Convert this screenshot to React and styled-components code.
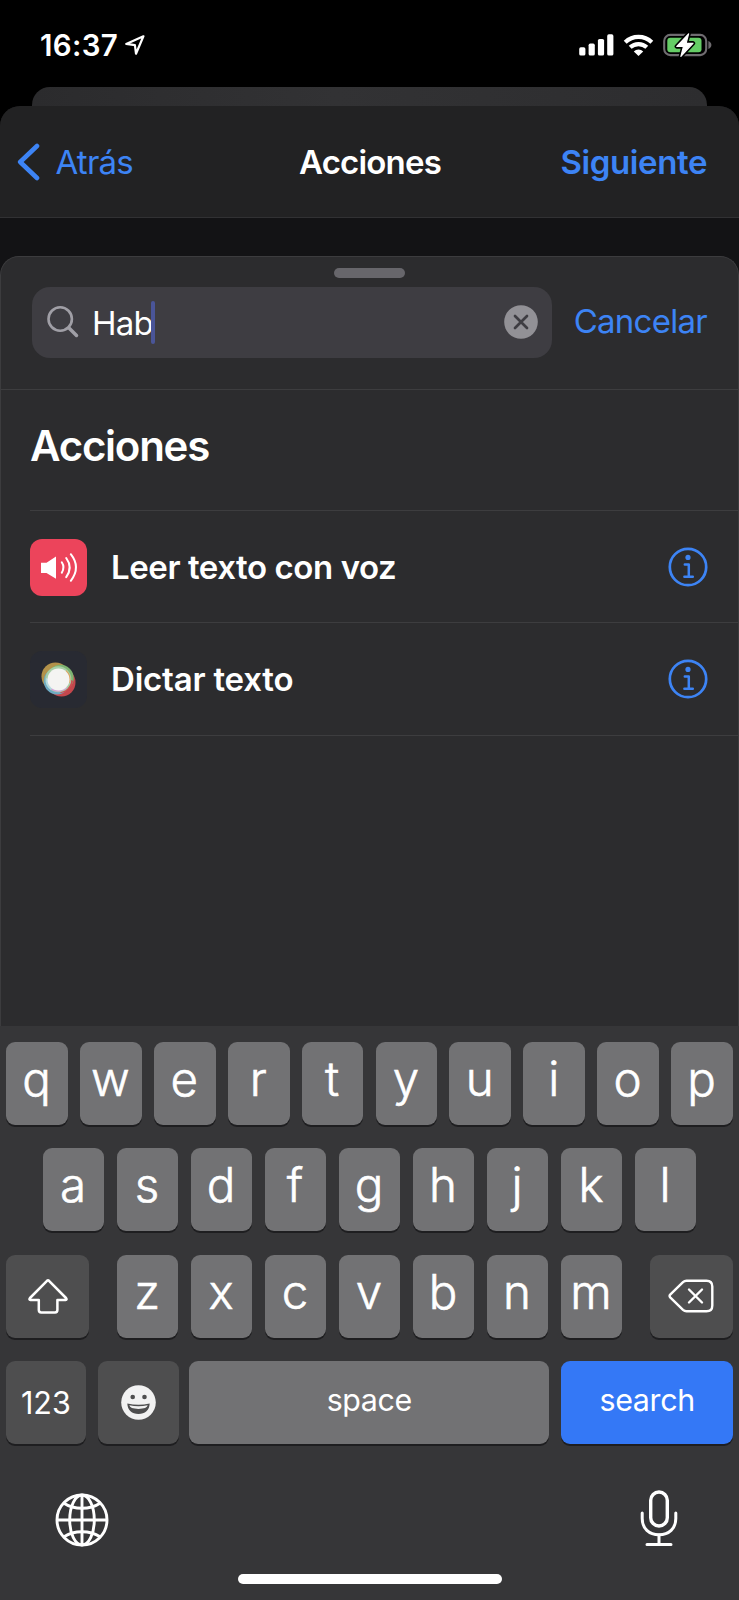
import React from "react";
import styled, { createGlobalStyle } from "styled-components";

const blue = "#3d84f5";

const GlobalStyle = createGlobalStyle`
  *, *::before, *::after { box-sizing: border-box; }
  body { margin: 0; background: #000; }
  button { font: inherit; color: inherit; background: none; border: 0; margin: 0; padding: 0; }
  svg { display: block; flex: none; }
`;

const Phone = styled.div`
  display: flex;
  flex-direction: column;
  width: 739px;
  height: 1600px;
  overflow: hidden;
  background: #000;
  color: #fff;
  font-family: Inter, "Liberation Sans", sans-serif;
`;

const StatusBar = styled.header`
  display: flex;
  align-items: center;
  height: 87px;
  padding: 3px 27px 0 40px;
`;

const Clock = styled.time`
  width: 85px;
  font-size: 29.5px;
  font-weight: 600;
  letter-spacing: 0.3px;
  white-space: nowrap;
`;

const StatusIcons = styled.div`
  display: flex;
  align-items: center;
  gap: 9px;
  margin-left: auto;
`;

const BackSheet = styled.div`
  flex: none;
  height: 19px;
  margin: 0 32px;
  border-radius: 18px 18px 0 0;
  background: linear-gradient(90deg, #2b2b2d, #323234 45%, #2d2d2f);
`;

const Sheet = styled.div`
  flex: 1;
  display: flex;
  flex-direction: column;
  min-height: 0;
  border-radius: 20px 20px 0 0;
  background: #131315;
  overflow: hidden;
`;

const NavBar = styled.nav`
  flex: none;
  display: grid;
  grid-template-columns: 1fr auto 1fr;
  align-items: center;
  height: 112px;
  padding: 0 32px 0 17px;
  background: #222223;
  border-bottom: 1px solid #313133;
  font-size: 33px;
`;

const BackButton = styled.button`
  display: flex;
  align-items: center;
  gap: 14.5px;
  color: ${blue};
  letter-spacing: -0.75px;
`;

const NavTitle = styled.h1`
  margin: 0 0 0 16px;
  font-size: 33px;
  font-weight: 600;
  letter-spacing: -0.8px;
`;

const NextButton = styled.button`
  justify-self: end;
  color: ${blue};
  font-weight: 600;
  letter-spacing: -0.4px;
`;

const Panel = styled.main`
  flex: none;
  display: flex;
  flex-direction: column;
  height: 770px;
  margin-top: 38px;
  border: 1px solid #3c3c3e;
  border-bottom: 0;
  border-radius: 19px 19px 0 0;
  background: #2c2c2e;
`;

const Grabber = styled.div`
  width: 71px;
  height: 10px;
  margin: 11px auto 9.5px;
  border-radius: 5px;
  background: #67666b;
`;

const SearchRow = styled.div`
  display: flex;
  align-items: center;
  height: 102.5px;
  padding: 0 31px 32px;
  border-bottom: 1px solid #3d3d3f;
`;

const SearchField = styled.div`
  display: flex;
  align-items: center;
  width: 520px;
  height: 70.5px;
  padding: 0 14px 0 15px;
  border-radius: 18px;
  background: #3e3d42;
`;

const Query = styled.span`
  margin-left: 13px;
  padding-top: 1px;
  font-size: 33px;
  letter-spacing: -0.8px;
`;

const Caret = styled.span`
  width: 4px;
  height: 43px;
  margin-left: -1.5px;
  border-radius: 2px;
  background: #4a5598;
`;

const ClearButton = styled.button`
  margin-left: auto;
`;

const CancelButton = styled.button`
  margin: -3px 0 0 auto;
  color: ${blue};
  font-size: 33px;
  letter-spacing: -0.73px;
`;

const SectionTitle = styled.h2`
  display: flex;
  align-items: center;
  height: 120px;
  margin: 0;
  padding: 0 29px 10px;
  font-size: 42px;
  font-weight: 600;
  letter-spacing: -1.25px;
`;

const ActionList = styled.ul`
  list-style: none;
  margin: 0 0 0 29px;
  padding: 0;
  border-top: 1px solid #3d3d3f;
`;

const ActionRow = styled.li`
  display: flex;
  align-items: center;
  height: 112.3px;
  padding: 1px 30.5px 0 0;
  border-bottom: 1px solid #3d3d3f;
`;

const ActionIcon = styled.span`
  display: grid;
  place-items: center;
  width: 57px;
  height: 57px;
  border-radius: 12px;
  background: ${(p) => p.$tint};
`;

const ActionName = styled.span`
  margin-left: 24px;
  font-size: 33px;
  font-weight: 600;
  letter-spacing: ${(p) => p.$track}px;
`;

const InfoButton = styled.button`
  margin-left: auto;
`;

const Keyboard = styled.section`
  flex: 1;
  display: flex;
  flex-direction: column;
  padding: 16px 6px 0;
  background: #363638;
`;

const KeyRow = styled.div`
  display: flex;
  justify-content: center;
  gap: ${(p) => p.$gap || 12.1}px;
  margin-bottom: 23.4px;
`;

const keyColors = { letter: "#727274", dark: "#4e4e4f", accent: "#3478f6" };

const Key = styled.button`
  display: flex;
  flex: none;
  align-items: center;
  justify-content: center;
  width: ${(p) => p.$width || 61.8}px;
  height: 83px;
  margin: ${(p) => p.$margin || 0};
  padding-bottom: ${(p) => p.$lift || 0}px;
  border-radius: 9px;
  background: ${(p) => keyColors[p.$kind || "letter"]};
  box-shadow: 0 2px 0 #1e1e20;
  font-size: ${(p) => p.$size || 47.5}px;
  font-weight: ${(p) => p.$weight || 300};
  letter-spacing: ${(p) => p.$track || 0}px;
`;

const LetterKey = styled(Key)`
  padding-right: 1px;
  -webkit-text-stroke: 0.6px #fff;
`;

const BottomBar = styled.div`
  display: flex;
  justify-content: space-between;
  align-items: center;
  height: 60px;
  margin-top: 22px;
  padding: 0 55px 0 48.5px;
`;

const HomeIndicator = styled.div`
  width: 264px;
  height: 10px;
  margin: 24px auto 0;
  border-radius: 5px;
  background: #fff;
`;

const LocationIcon = () => (
  <svg width="20" height="20" viewBox="0 0 20 20" fill="none" stroke="#fff" strokeWidth="2.2" strokeLinejoin="round">
    <path d="M18.4 1.3 1.2 8.9 9.9 10.1 11 18.7Z" />
  </svg>
);

const SignalIcon = () => (
  <svg width="35" height="22" viewBox="0 0 35 22" fill="#fff">
    <rect x="0.2" y="13.2" width="6.2" height="8.4" rx="1.7" />
    <rect x="9.6" y="9.6" width="6.2" height="12" rx="1.7" />
    <rect x="18.9" y="4.9" width="6.2" height="16.7" rx="1.7" />
    <rect x="28.2" y="0.3" width="6.2" height="21.3" rx="1.7" />
  </svg>
);

const WifiIcon = () => (
  <svg width="31" height="23" viewBox="0 0 31 23">
    <g fill="none" stroke="#fff" strokeWidth="4.2">
      <path d="M2.2 8.2A19.3 19.3 0 0 1 28.8 8.2" />
      <path d="M7.2 13.3A12.2 12.2 0 0 1 23.8 13.3" />
    </g>
    <path d="M10.8 17.4A6.8 6.8 0 0 1 20.2 17.4L15.500 22.100Z" fill="#fff" />
  </svg>
);

const BatteryIcon = () => (
  <svg width="49" height="26" viewBox="0 0 49 26">
    <rect x="1.200" y="2.900" width="42" height="20.200" rx="6" fill="none" stroke="#6f6c70" strokeWidth="2.100" />
    <path d="M45.400 9v8c2-.8 3-2.300 3-4s-1-3.200-3-4Z" fill="#6f6c70" />
    <rect x="4.300" y="5.800" width="34.200" height="14.400" rx="3" fill="#65cd66" />
    <path d="M25.600 1.800 13.800 14.500h6.700L17.900 24.300 30 11.300h-6.900Z" fill="#fff" stroke="#000" strokeWidth="4.400" strokeLinejoin="round" />
    <path d="M25.600 1.800 13.800 14.500h6.700L17.900 24.300 30 11.300h-6.900Z" fill="#fff" stroke="#fff" strokeWidth="1.200" strokeLinejoin="round" />
  </svg>
);

const ChevronIcon = () => (
  <svg width="24" height="38" viewBox="0 0 24 38" fill="none" stroke={blue} strokeWidth="4.600" strokeLinecap="round" strokeLinejoin="round">
    <path d="M20 3 3.200 19 20 35" />
  </svg>
);

const SearchIcon = () => (
  <svg width="32" height="32" viewBox="0 0 32 32" fill="none" stroke="#a09fa6" strokeLinecap="round">
    <circle cx="13.200" cy="13" r="11.700" strokeWidth="2.600" />
    <path d="M22 22 29.500 29.400" strokeWidth="3.500" />
  </svg>
);

const ClearIcon = () => (
  <svg width="34" height="34" viewBox="0 0 34 34">
    <circle cx="17" cy="17" r="16.800" fill="#929196" />
    <path d="M11 11 23 23M23 11 11 23" stroke="#3e3d42" strokeWidth="2.700" strokeLinecap="round" />
  </svg>
);

const SpeakerIcon = () => (
  <svg width="57" height="57" viewBox="0 0 57 57">
    <path d="M11 23.700h5.500L26 17.500v22.200l-9.500-5.800H11Z" fill="#fff" />
    <g fill="none" stroke="#fff" strokeWidth="2" strokeLinecap="round">
      <path d="M31.800 23.300q3.300 5 0 10.400" />
      <path d="M36.200 19q7 9.600 0 19.100" />
      <path d="M40.800 15.200q10.400 13.200 0 26.600" />
    </g>
  </svg>
);

const DictationIcon = () => (
  <svg width="57" height="57" viewBox="0 0 57 57">
    <circle cx="25.500" cy="25.500" r="14" fill="#b3924a" />
    <circle cx="31.500" cy="31.500" r="14" fill="#c4474c" />
    <circle cx="30.500" cy="27" r="13.200" fill="#7db471" />
    <circle cx="27" cy="30.200" r="13.200" fill="#6eabc4" />
    <path d="M31 42a13.500 13.500 0 0 0 12-12L36 26 26 38Z" fill="#cf4c52" />
    <circle cx="28.300" cy="28.300" r="13" fill="#a8cfa6" />
    <path d="M36 19a12.600 12.600 0 0 1 4 13l-5-3Z" fill="#dda35d" />
    <path d="M20 38q8 6 17-1l-4-7H22Z" fill="#d2a3d8" />
    <path d="M16 27a12 12 0 0 0 5 12l5-8Z" fill="#b3dae0" />
    <circle cx="28.500" cy="28.500" r="11" fill="#f4f4f2" />
  </svg>
);

const InfoIcon = () => (
  <svg width="40" height="40" viewBox="0 0 40 40" fill="none" stroke={blue} strokeWidth="2.700" strokeLinecap="round" strokeLinejoin="round">
    <circle cx="20" cy="20" r="18.200" />
    <circle cx="20" cy="10.400" r="2.600" fill={blue} stroke="none" />
    <path d="M16.800 17.500h4v12.200M16.400 29.700h8.400" strokeWidth="2.500" />
  </svg>
);

const ShiftIcon = () => (
  <svg width="40" height="36" viewBox="0 0 40 36" fill="none" stroke="#fff" strokeWidth="2.500" strokeLinejoin="round">
    <path d="M19 2.800Q20 1.900 21 2.800L38 20q1.300 1.700-.5 1.900H29.400V32q0 2.400-2.400 2.400H13.200q-2.400 0-2.400-2.400V21.900H2.500Q.7 21.700 2 20Z" />
  </svg>
);

const DeleteIcon = () => (
  <svg width="46" height="34" viewBox="0 0 46 34" fill="none" stroke="#fff" strokeWidth="2.400" strokeLinecap="round" strokeLinejoin="round">
    <path d="M18.500 1.700H38.500Q44.300 1.700 44.300 7.500V26.500Q44.300 32.300 38.500 32.300H18.500Q16.500 32.300 15 30.900L2.200 18.400Q1 17 2.200 15.600L15 3.100Q16.500 1.700 18.500 1.700Z" />
    <path d="M21 10.500 34 23.500M34 10.500 21 23.500" />
  </svg>
);

const EmojiIcon = () => (
  <svg width="35" height="35" viewBox="0 0 35 35">
    <circle cx="17.500" cy="17.500" r="17.300" fill="#f2f2f2" />
    <circle cx="11.700" cy="12" r="2.300" fill="#4e4e4f" />
    <circle cx="23.500" cy="12" r="2.300" fill="#4e4e4f" />
    <path d="M6.300 18.600Q17.500 21 28.700 18.600C28.500 25.300 24 29 17.500 29S6.500 25.300 6.300 18.600Z" fill="#4e4e4f" />
    <path d="M8.300 20.300Q17.500 22.200 26.700 20.300Q26 23.800 17.500 23.900Q9 23.800 8.300 20.300Z" fill="#f2f2f2" />
  </svg>
);

const GlobeIcon = () => (
  <svg width="54" height="54" viewBox="0 0 54 54" fill="none" stroke="#fff" strokeWidth="2.900">
    <circle cx="27" cy="27" r="25" />
    <ellipse cx="27" cy="27" rx="12.300" ry="25" />
    <path d="M27 2v50M2 27h50" />
    <path d="M9 10.300Q16.500 15.300 27 15.300T45 10.300M9 43.700Q16.500 38.700 27 38.700T45 43.700" />
  </svg>
);

const MicIcon = () => (
  <svg width="38" height="59" viewBox="0 0 38 59" fill="none" stroke="#fff" strokeLinecap="round">
    <rect x="10.700" y="2" width="16.600" height="34" rx="8.300" strokeWidth="3.400" />
    <path d="M2.200 23v5.500C2.200 38.500 9 44.700 19 44.700S35.800 38.500 35.800 28.500V23" strokeWidth="3" />
    <path d="M19 45v9M7 54.500h24" strokeWidth="3" />
  </svg>
);

const actions = [
  { name: "Leer texto con voz", track: -0.43, tint: "#ec445b", Icon: SpeakerIcon },
  { name: "Dictar texto", track: -0.2, tint: "#282a32", Icon: DictationIcon },
];

const Letters = ({ row }) => row.split("").map((c) => <LetterKey key={c} $lift={10.5}>{c}</LetterKey>);

export default function App() {
  return (
    <Phone>
      <GlobalStyle />
      <StatusBar>
        <Clock>16:37</Clock>
        <LocationIcon />
        <StatusIcons>
          <SignalIcon />
          <WifiIcon />
          <BatteryIcon />
        </StatusIcons>
      </StatusBar>
      <BackSheet />
      <Sheet>
        <NavBar>
          <BackButton><ChevronIcon />Atrás</BackButton>
          <NavTitle>Acciones</NavTitle>
          <NextButton>Siguiente</NextButton>
        </NavBar>
        <Panel>
          <Grabber />
          <SearchRow>
            <SearchField>
              <SearchIcon />
              <Query>Hab</Query>
              <Caret />
              <ClearButton aria-label="Borrar"><ClearIcon /></ClearButton>
            </SearchField>
            <CancelButton>Cancelar</CancelButton>
          </SearchRow>
          <SectionTitle>Acciones</SectionTitle>
          <ActionList>
            {actions.map(({ name, track, tint, Icon }) => (
              <ActionRow key={name}>
                <ActionIcon $tint={tint}><Icon /></ActionIcon>
                <ActionName $track={track}>{name}</ActionName>
                <InfoButton aria-label="Información"><InfoIcon /></InfoButton>
              </ActionRow>
            ))}
          </ActionList>
        </Panel>
        <Keyboard>
          <KeyRow><Letters row="qwertyuiop" /></KeyRow>
          <KeyRow $gap={12.2}><Letters row="asdfghjkl" /></KeyRow>
          <KeyRow $gap={12.2}>
            <Key $kind="dark" $width={83} $margin="0 15.200px 0 0" aria-label="Mayúsculas"><ShiftIcon /></Key>
            <Letters row="zxcvbnm" />
            <Key $kind="dark" $width={83} $margin="0 0 0 15.200px" aria-label="Retroceso"><DeleteIcon /></Key>
          </KeyRow>
          <KeyRow>
            <Key $kind="dark" $width={79.5} $size={30.5} $weight={400}>123</Key>
            <Key $kind="dark" $width={81} aria-label="Emoji"><EmojiIcon /></Key>
            <Key $width={360} $size={30.4} $weight={400} $track={-0.35} $lift={5} $margin="0 0 0 -1.500px">space</Key>
            <Key $kind="accent" $width={171.5} $size={30.4} $weight={400} $track={-0.35} $lift={5}>search</Key>
          </KeyRow>
          <BottomBar>
            <GlobeIcon />
            <MicIcon />
          </BottomBar>
          <HomeIndicator />
        </Keyboard>
      </Sheet>
    </Phone>
  );
}
